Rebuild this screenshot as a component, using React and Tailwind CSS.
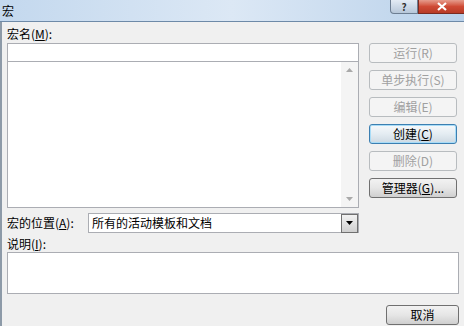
import React from 'react';

const font = { fontFamily: '"Noto Sans CJK SC", "Liberation Sans", sans-serif' };

function Btn({ children, disabled, focused, width = 'w-[88px]' }) {
  let cls = 'border-[#707070] bg-gradient-to-b from-[#f2f2f2] via-[#e6e6e6] to-[#cfcfcf] text-black';
  if (disabled) cls = 'border-[#b8bcbf] bg-[#f4f4f4] text-[#a0a0a0]';
  if (focused) cls = 'border-[#3c7fb1] bg-gradient-to-b from-[#f6f9fb] via-[#e4ecf2] to-[#cdd9e2] text-black shadow-[inset_0_0_0_1px_#a8dcf7]';
  return (
    <div className={`h-[20px] ${width} rounded-[3px] border flex items-center justify-center text-[12px] leading-none ${cls}`}>
      {children}
    </div>
  );
}

export default function App() {
  return (
    <div className="w-[464px] h-[326px] bg-[#f0f0f0] overflow-hidden flex flex-col" style={font}>
      {/* Title bar */}
      <div className="h-[22px] relative bg-gradient-to-r from-[#c3d8ee] via-[#dce8f5] to-[#b9d1ea] border-b border-[#6e8aa8] flex items-center">
        <span className="ml-[2px] text-[12px] text-black leading-none">宏</span>
        <div className="absolute top-0 left-[390px] w-[28px] h-[14px] rounded-bl-[4px] border border-t-0 border-[#6d7e92] bg-gradient-to-b from-[#e3ebf4] to-[#b7c7d9] flex items-center justify-center">
          <span className="text-[10px] leading-[12px] text-[#333] font-bold">?</span>
        </div>
        <div className="absolute top-0 left-[418px] w-[48px] h-[14px] border border-t-0 border-[#7a2a20] bg-gradient-to-b from-[#e59b8c] via-[#cf4a35] to-[#b83a26] flex items-center justify-center">
          <svg width="10" height="9" viewBox="0 0 10 9"><path d="M1 1 L9 8 M9 1 L1 8" stroke="#fff" strokeWidth="2.2" /></svg>
        </div>
      </div>

      <div className="flex-1 flex flex-col border-l-2 border-[#8d9aa8] pl-[5px]">
        <div className="flex">
          {/* left column */}
          <div className="w-[352px] flex flex-col">
            <div className="h-[21px] pt-[4px] text-[12px] leading-[16px]">宏名(<span className="underline">M</span>):</div>
            <div className="h-[19px] bg-white border border-[#abadb3]" />
            <div className="h-[146px] bg-white border border-[#abadb3] border-t-0 flex justify-end">
              <div className="w-[17px] bg-[#f4f4f4] flex flex-col justify-between items-center py-[6px]">
                <svg width="7" height="4" viewBox="0 0 7 4"><path d="M0 4 L3.5 0 L7 4 Z" fill="#a9a9a9" /></svg>
                <svg width="7" height="4" viewBox="0 0 7 4"><path d="M0 0 L3.5 4 L7 0 Z" fill="#a9a9a9" /></svg>
              </div>
            </div>
            <div className="mt-[5px] flex items-center">
              <div className="w-[81px] text-[12px] leading-none">宏的位置(<span className="underline">A</span>):</div>
              <div className="flex-1 h-[20px] bg-white border border-[#abadb3] flex items-center">
                <span className="flex-1 pl-[3px] text-[12px] leading-none">所有的活动模板和文档</span>
                <div className="w-[17px] h-[19px] border border-[#707070] bg-gradient-to-b from-[#f2f2f2] to-[#cfcfcf] flex items-center justify-center">
                  <svg width="7" height="4" viewBox="0 0 7 4"><path d="M0 0 L3.5 4 L7 0 Z" fill="#000" /></svg>
                </div>
              </div>
            </div>
          </div>

          {/* right column */}
          <div className="ml-[10px] pt-[21px] flex flex-col gap-[7px]">
            <Btn disabled>运行(R)</Btn>
            <Btn disabled>单步执行(S)</Btn>
            <Btn disabled>编辑(E)</Btn>
            <Btn focused>创建(<span className="underline">C</span>)</Btn>
            <Btn disabled>删除(D)</Btn>
            <Btn>管理器(<span className="underline">G</span>)...</Btn>
          </div>
        </div>

        <div className="h-[19px] pt-[3px] text-[12px] leading-[16px]">说明(<span className="underline">I</span>):</div>
        <div className="w-[452px] h-[42px] bg-white border border-[#abadb3]" />
        <div className="mt-[11px] w-[452px] flex justify-end">
          <Btn width="w-[73px]">取消</Btn>
        </div>
      </div>
    </div>
  );
}
